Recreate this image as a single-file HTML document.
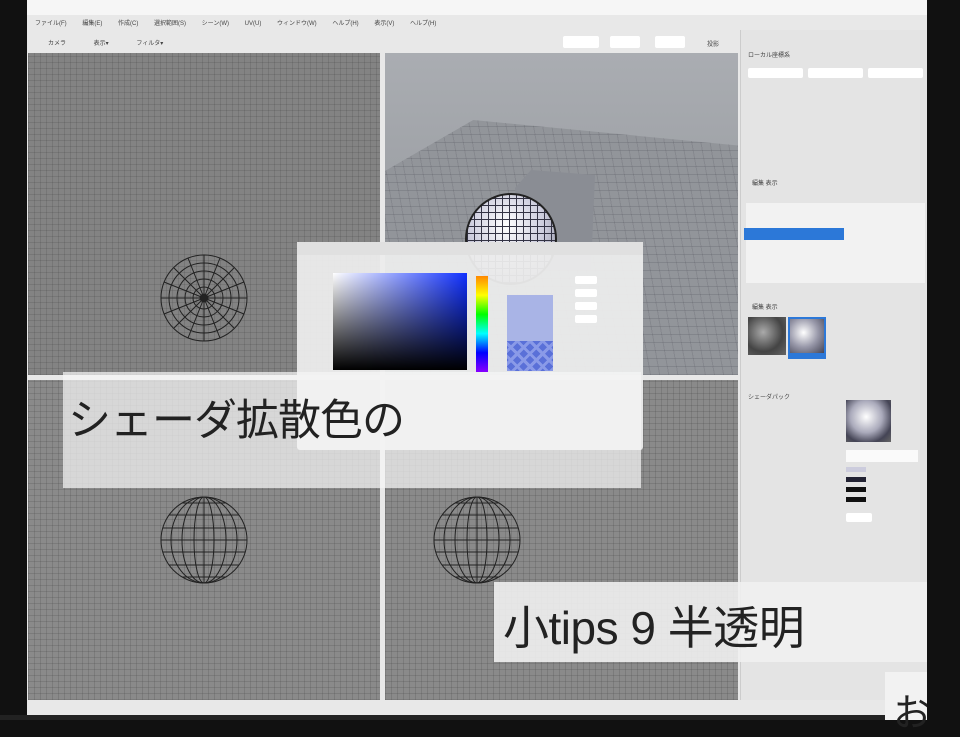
<!DOCTYPE html><html><head><meta charset="utf-8"><style>
*{margin:0;padding:0;box-sizing:border-box}
html,body{width:960px;height:720px}
body{background:#111;position:relative;overflow:hidden;font-family:"Liberation Sans","Noto Sans CJK JP",sans-serif}
.a{position:absolute}
.grid{background-color:#8a8a8a;background-image:repeating-linear-gradient(0deg,rgba(70,70,70,.22) 0 1px,transparent 1px 6px),repeating-linear-gradient(90deg,rgba(70,70,70,.22) 0 1px,transparent 1px 6px)}
.t{font-size:6px;color:#444}
.btn{background:#fff;border-radius:2px}
</style></head><body>
<div class="a" style="left:27px;top:0;width:900px;height:715px;background:#e8e8e8"></div>
<div class="a" style="left:27px;top:0;width:900px;height:15px;background:#f6f6f6"></div>
<div class="a t" style="left:35px;top:18px;word-spacing:14px">ファイル(F) 編集(E) 作成(C) 選択範囲(S) シーン(W) UV(U) ウィンドウ(W) ヘルプ(H) 表示(V) ヘルプ(H)</div>
<div class="a t" style="left:48px;top:38px;word-spacing:26px">カメラ 表示▾ フィルタ▾</div>
<div class="a btn" style="left:563px;top:36px;width:36px;height:12px"></div>
<div class="a btn" style="left:610px;top:36px;width:30px;height:12px"></div>
<div class="a btn" style="left:655px;top:36px;width:30px;height:12px"></div>
<div class="a t" style="left:707px;top:39px">投影</div>
<!-- viewports -->
<div class="a grid" style="left:28px;top:53px;width:352px;height:322px;background-color:#838383"></div>
<div class="a" style="left:385px;top:53px;width:353px;height:322px;background:linear-gradient(#aaadb2,#a0a3a8 35%,#94979c)"></div>
<div class="a" style="left:385px;top:120px;width:353px;height:255px;clip-path:polygon(0 20%,25% 0,100% 10%,100% 100%,0 100%);background-color:#92959a;background-image:repeating-linear-gradient(0deg,rgba(60,60,70,.18) 0 1px,transparent 1px 8px),repeating-linear-gradient(80deg,rgba(60,60,70,.15) 0 1px,transparent 1px 9px)"></div>
<div class="a" style="left:515px;top:170px;width:80px;height:100px;background:#8a8d94;clip-path:polygon(0 18%,20% 0,100% 5%,95% 100%,10% 100%)"></div>
<div class="a" style="left:465px;top:193px;width:92px;height:92px;border-radius:50%;border:2px solid #222;background-image:repeating-linear-gradient(0deg,#334 0 1px,transparent 1px 7px),repeating-linear-gradient(90deg,#334 0 1px,transparent 1px 7px),radial-gradient(circle at 45% 35%,#fff,#ccd 50%,#778)"></div>
<div class="a grid" style="left:28px;top:380px;width:352px;height:320px"></div>
<div class="a grid" style="left:385px;top:380px;width:353px;height:320px"></div>
<svg class="a" style="left:0;top:0" width="960" height="720">
<g fill="none" stroke="#222" stroke-width="1">
<g transform="translate(204,298)"><circle r="43"/><circle r="35"/><circle r="27"/><circle r="19"/><circle r="11"/><circle r="4" fill="#222"/>
<path d="M-43 0H43M0-43V43M-30-30L30 30M30-30L-30 30M-40-16L40 16M-40 16L40-16M-16-40L16 40M16-40L-16 40"/></g>
<g transform="translate(204,540)"><circle r="43"/><path d="M-43 0H43M-41-12H41M-41 12H41M-35-25H35M-35 25H35M-22-37H22M-22 37H22"/><ellipse rx="10" ry="43"/><ellipse rx="22" ry="43"/><ellipse rx="33" ry="43"/><path d="M0-43V43"/></g>
<g transform="translate(477,540)"><circle r="43"/><path d="M-43 0H43M-41-12H41M-41 12H41M-35-25H35M-35 25H35M-22-37H22M-22 37H22"/><ellipse rx="10" ry="43"/><ellipse rx="22" ry="43"/><ellipse rx="33" ry="43"/><path d="M0-43V43"/></g>
</g></svg>
<!-- right panel -->
<div class="a" style="left:740px;top:30px;width:187px;height:670px;background:#e4e4e4;border-left:1px solid #ccc"></div>
<div class="a t" style="left:748px;top:50px">ローカル座標系</div>
<div class="a btn" style="left:748px;top:68px;width:55px;height:10px"></div>
<div class="a btn" style="left:808px;top:68px;width:55px;height:10px"></div>
<div class="a btn" style="left:868px;top:68px;width:55px;height:10px"></div>
<div class="a t" style="left:752px;top:178px">編集 表示</div>
<div class="a" style="left:746px;top:203px;width:179px;height:80px;background:#f2f2f2"></div>
<div class="a" style="left:744px;top:228px;width:100px;height:12px;background:#2c78d8"></div>
<div class="a t" style="left:752px;top:302px">編集 表示</div>
<div class="a" style="left:748px;top:317px;width:38px;height:38px;background:radial-gradient(circle at 40% 40%,#aaa,#444 60%,#666)"></div>
<div class="a" style="left:788px;top:317px;width:38px;height:42px;background:#2c78d8;padding:2px"><div style="width:34px;height:34px;background:radial-gradient(circle at 40% 40%,#fff,#99a 50%,#445)"></div></div>
<div class="a t" style="left:748px;top:392px">シェーダパック</div>
<div class="a" style="left:846px;top:400px;width:45px;height:42px;background:radial-gradient(circle at 45% 40%,#fff,#aab 45%,#445 75%,#666)"></div>
<div class="a" style="left:846px;top:450px;width:72px;height:12px;background:#fafafa"></div>
<div class="a" style="left:846px;top:467px;width:20px;height:5px;background:#ccd"></div>
<div class="a" style="left:846px;top:477px;width:20px;height:5px;background:#223"></div>
<div class="a" style="left:846px;top:487px;width:20px;height:5px;background:#111"></div>
<div class="a" style="left:846px;top:497px;width:20px;height:5px;background:#111"></div>
<div class="a btn" style="left:846px;top:513px;width:26px;height:9px"></div>
<!-- color dialog -->
<div class="a" style="left:297px;top:242px;width:346px;height:208px;background:rgba(236,236,236,.95);border-radius:3px"></div>
<div class="a" style="left:297px;top:242px;width:346px;height:13px;background:#e0e0e0"></div>
<div class="a" style="left:333px;top:273px;width:134px;height:97px;background:linear-gradient(to bottom,transparent,#000),linear-gradient(to right,#fff,#1030ff)"></div>
<div class="a" style="left:476px;top:276px;width:12px;height:96px;background:linear-gradient(#f80,#ff0 20%,#0f0 40%,#0ff 60%,#00f 80%,#80f)"></div>
<div class="a" style="left:507px;top:295px;width:46px;height:46px;background:#a9b4e6"></div>
<div class="a" style="left:507px;top:341px;width:46px;height:30px;background:#5a70d8;background-image:repeating-linear-gradient(45deg,#8a9ae8 0 3px,transparent 3px 9px),repeating-linear-gradient(-45deg,#8a9ae8 0 3px,transparent 3px 9px)"></div>
<div class="a btn" style="left:575px;top:276px;width:22px;height:8px"></div>
<div class="a btn" style="left:575px;top:289px;width:22px;height:8px"></div>
<div class="a btn" style="left:575px;top:302px;width:22px;height:8px"></div>
<div class="a btn" style="left:575px;top:315px;width:22px;height:8px"></div>
<!-- captions -->
<div class="a" style="left:63px;top:372px;width:578px;height:116px;background:rgba(245,245,245,.72)"></div>
<div class="a" style="left:68px;top:386px;font-size:43px;color:#222;letter-spacing:-1px">シェーダ拡散色の</div>
<div class="a" style="left:494px;top:582px;width:433px;height:80px;background:rgba(240,240,240,.9)"></div>
<div class="a" style="left:503px;top:592px;font-size:46px;color:#222;letter-spacing:-.5px">小tips 9 半透明</div>
<div class="a" style="left:885px;top:672px;width:42px;height:48px;background:#f2f2f2"></div>
<div class="a" style="left:893px;top:682px;font-size:38px;color:#222;width:34px;overflow:hidden;white-space:nowrap">お</div>
<div class="a" style="left:0;top:715px;width:885px;height:5px;background:#222"></div>
</body></html>
